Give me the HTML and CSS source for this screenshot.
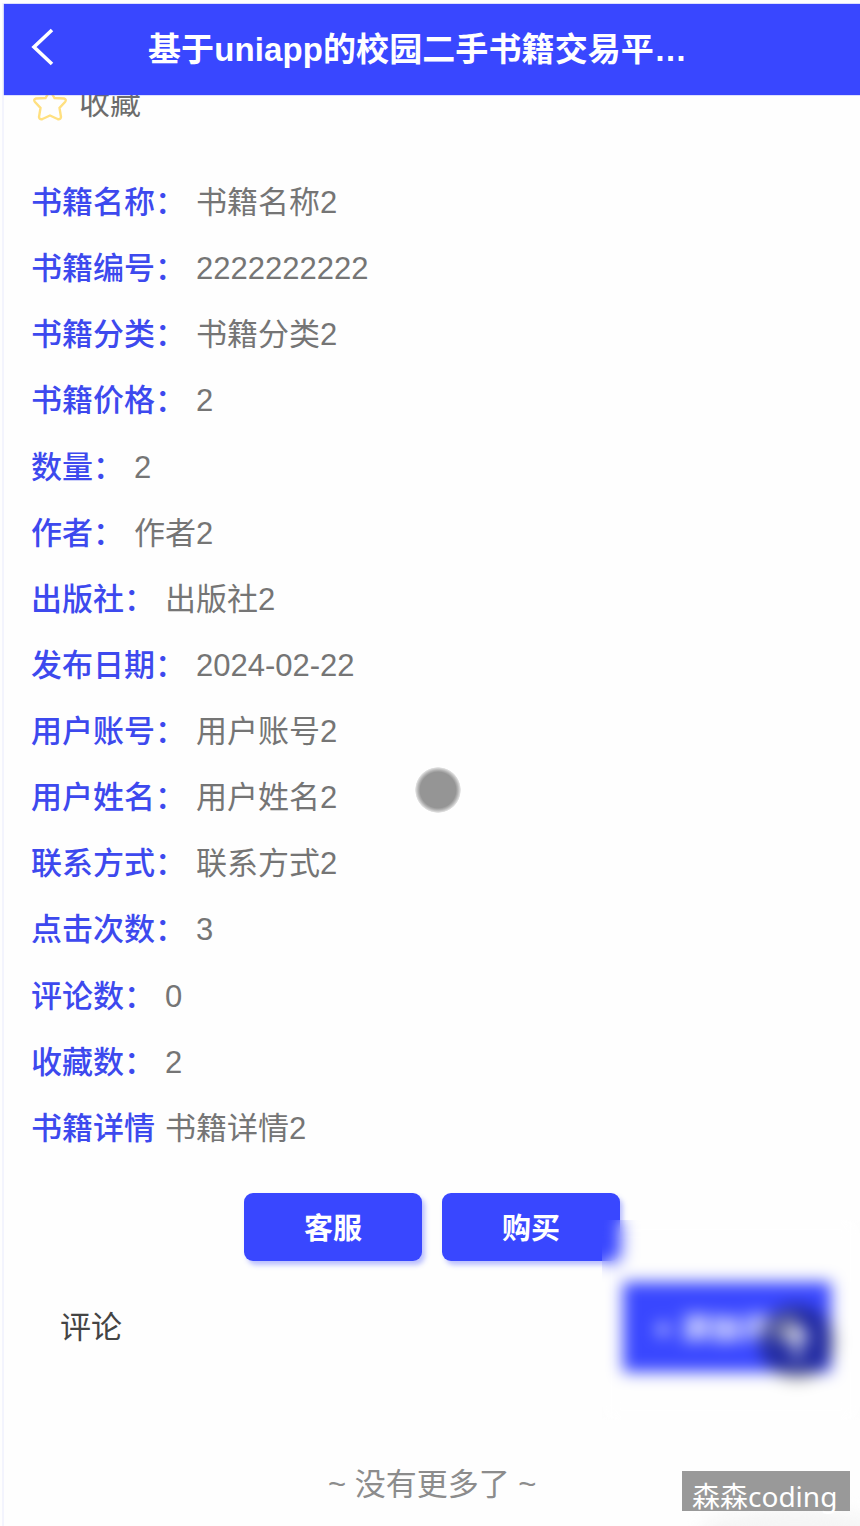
FILE: index.html
```html
<!DOCTYPE html>
<html lang="zh-CN">
<head>
<meta charset="utf-8">
<title>书籍详情</title>
<link rel="stylesheet" href="styles.css">
</head>
<body>
<div class="page">
  <header class="navbar">
    <svg class="back" width="24" height="38" viewBox="0 0 24 38"><path d="M21 2 3 19l18 17"/></svg>
    <h1 class="title">基于uniapp的校园二手书籍交易平…</h1>
  </header>
  <main class="content">
    <div class="favorite">
      <svg class="star" width="36" height="34" viewBox="0 0 36 34"><path d="M18 2.5 22.5 10 32 10.500Q35 11.500 33 14L27.500 20 29 29Q28.500 32 25.500 31L18 27.500 10.500 31Q7.500 32 7 29L8.500 20 3 14Q1 11.500 4 10.500L13.500 10Z"/></svg>
      <span>收藏</span>
    </div>
    <dl class="details">
      <div class="row"><dt>书籍名称：</dt><dd>书籍名称2</dd></div>
      <div class="row"><dt>书籍编号：</dt><dd>2222222222</dd></div>
      <div class="row"><dt>书籍分类：</dt><dd>书籍分类2</dd></div>
      <div class="row"><dt>书籍价格：</dt><dd>2</dd></div>
      <div class="row"><dt>数量：</dt><dd>2</dd></div>
      <div class="row"><dt>作者：</dt><dd>作者2</dd></div>
      <div class="row"><dt>出版社：</dt><dd>出版社2</dd></div>
      <div class="row"><dt>发布日期：</dt><dd>2024-02-22</dd></div>
      <div class="row"><dt>用户账号：</dt><dd>用户账号2</dd></div>
      <div class="row"><dt>用户姓名：</dt><dd>用户姓名2</dd></div>
      <div class="row"><dt>联系方式：</dt><dd>联系方式2</dd></div>
      <div class="row"><dt>点击次数：</dt><dd>3</dd></div>
      <div class="row"><dt>评论数：</dt><dd>0</dd></div>
      <div class="row"><dt>收藏数：</dt><dd>2</dd></div>
      <div class="row"><dt>书籍详情</dt><dd>书籍详情2</dd></div>
    </dl>
    <div class="actions">
      <button class="btn">客服</button>
      <button class="btn">购买</button>
    </div>
    <section class="comments">
      <h2 class="comments-title">评论</h2>
      <button class="add">+ 添加评论</button>
    </section>
    <p class="nomore">~ 没有更多了 ~</p>
  </main>
  <div class="fab"><svg width="30" height="36" viewBox="0 0 30 36"><path d="M15 34V5M4 16 15 5l11 11"/></svg></div>
  <div class="frost"></div>
  <div class="touch"></div>
  <div class="corner-shade"></div>
  <div class="watermark">森森coding</div>
</div>
</body>
</html>
```

FILE: styles.css
```css
* { box-sizing: border-box; }
body { margin: 0; background: #fefefe; }
.page {
  position: relative;
  width: 860px;
  height: 1526px;
  padding: 4px 0 0 4px;
  overflow: hidden;
  background: #fefefe;
  font-family: "Liberation Sans", "Noto Sans CJK SC", sans-serif;
  font-size: 31px;
  color: #6c6c6c;
}
.page::before {
  content: "";
  position: absolute;
  left: 2px;
  top: 3px;
  bottom: 0;
  width: 2px;
  background: #f3f4fd;
}
.navbar {
  position: relative;
  z-index: 1;
  display: flex;
  align-items: center;
  height: 91px;
  padding-left: 27px;
  background: #3947ff;
  box-shadow: 0 0 1px #3947ff;
}
.back { margin-top: -5px; fill: none; stroke: #fff; stroke-width: 3.6; }
.title {
  margin: 0 0 0 93px;
  font-size: 33px;
  line-height: 48px;
  letter-spacing: .1px;
  font-weight: 700;
  color: #fff;
  white-space: nowrap;
}
.content { padding-left: 27px; }
.favorite {
  display: flex;
  align-items: center;
  gap: 11px;
  height: 46px;
  margin-top: -14px;
  line-height: 46px;
}
.star { margin: 1px 0 0 1px; fill: none; stroke: #ffe080; stroke-width: 2.4; }
.details { margin: 43px 0 0; }
.row { display: flex; gap: 10px; height: 66.14px; line-height: 66px; white-space: nowrap; }
dt { color: #3d49ee; font-weight: 500; }
dd { margin: 0; color: #757575; }
button { border: 0; padding: 0; font-family: inherit; color: #fff; background: #3947ff; }
.actions { display: flex; gap: 20px; margin: 31px 0 0 213px; }
.btn {
  width: 178px;
  height: 68px;
  padding-bottom: 1px;
  border-radius: 9px;
  font-size: 29px;
  font-weight: 700;
  box-shadow: 3px 4px 5px rgba(57, 71, 255, .35);
}
.comments {
  display: flex;
  justify-content: space-between;
  align-items: center;
  height: 90px;
  margin: 21px 29px 0 29px;
}
.comments-title { margin: -4px 0 0; font-size: 31px; font-weight: 400; color: #444; }
.add { width: 208px; height: 90px; padding-bottom: 2px; font-size: 30px; font-weight: 700; }
.nomore { margin: 90px 0 0 297px; font-size: 31px; line-height: 46px; color: #8c8c8c; }
.fab {
  position: absolute;
  left: 759px;
  top: 1304px;
  display: grid;
  place-items: center;
  width: 76px;
  height: 76px;
  border-radius: 50%;
  background: rgba(0, 0, 0, .36);
}
.fab svg { fill: none; stroke: #fff; stroke-width: 5; }
.frost {
  position: absolute;
  left: 602px;
  top: 1220px;
  width: 258px;
  height: 200px;
  backdrop-filter: blur(8px);
}
.touch {
  position: absolute;
  left: 415px;
  top: 767px;
  width: 46px;
  height: 46px;
  border-radius: 50%;
  background: radial-gradient(circle closest-side, #959595 78%, #b4b4b4 87%, #e4e4e4 98%, transparent);
}
.corner-shade {
  position: absolute;
  left: 700px;
  top: 1508px;
  width: 190px;
  height: 50px;
  border-radius: 50%;
  background: #f5f5f5;
  filter: blur(8px);
}
.watermark {
  position: absolute;
  left: 682px;
  top: 1471px;
  width: 168px;
  height: 40px;
  padding-left: 10px;
  background: #999;
  color: #fff;
  font: 28px/50px "Noto Sans", "Noto Sans CJK SC", sans-serif;
  white-space: nowrap;
}
```
